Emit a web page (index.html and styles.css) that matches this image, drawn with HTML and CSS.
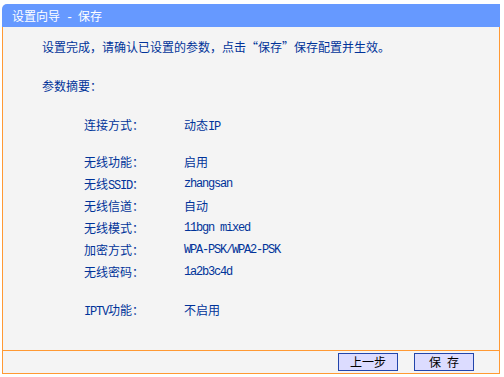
FILE: index.html
```html
<!DOCTYPE html>
<html lang="zh-CN">
<head>
    <meta charset="UTF-8">
    <meta name="viewport" content="width=device-width, initial-scale=1.0">
    <title>设置向导 - 保存</title>
    <link rel="stylesheet" href="styles.css">
</head>
<body>
    <div class="panel">
        <div class="title">设置向导<span class="en"> - </span>保存</div>
        <div class="content">
            <p class="intro">设置完成，请确认已设置的参数，点击<span class="q">“</span>保存<span class="q">”</span>保存配置并生效。</p>
            <p class="summary">参数摘要：</p>

            <div class="params">
                <div class="label">连接方式：</div>
                <div class="value">动态<span class="en">IP</span></div>
            </div>

            <div class="params">
                <div class="label">无线功能：</div>
                <div class="value">启用</div>
                <div class="label">无线<span class="en">SSID</span>：</div>
                <div class="value en">zhangsan</div>
                <div class="label">无线信道：</div>
                <div class="value">自动</div>
                <div class="label">无线模式：</div>
                <div class="value en">11bgn mixed</div>
                <div class="label">加密方式：</div>
                <div class="value en">WPA-PSK/WPA2-PSK</div>
                <div class="label">无线密码：</div>
                <div class="value en">1a2b3c4d</div>
            </div>

            <div class="params">
                <div class="label"><span class="en">IPTV</span>功能：</div>
                <div class="value">不启用</div>
            </div>
        </div>
        <div class="footer">
            <button type="button" class="btn">上一步</button>
            <button type="button" class="btn">保<span class="en"> </span>存</button>
        </div>
    </div>
</body>
</html>
```

FILE: styles.css
```css
body {
  margin: 0;
  background: #ffffff;
  font-family: "Noto Sans CJK SC", "DejaVu Sans", sans-serif;
  font-size: 12px;
  color: #003399;
}

/* half-width latin text, 6px per char like the router's bitmap font */
.en {
  font-family: "Liberation Mono", monospace;
  font-size: 12px;
  letter-spacing: -1.2px;
  white-space: pre;
}

.q {
  display: inline-block;
  width: 12px;
}

.panel {
  width: 498px;
  margin: 4px 0 0 2px;
}

.title {
  height: 23px;
  line-height: 23px;
  padding-left: 10px;
  background: #6699ff;
  color: #ffffff;
  border-top-left-radius: 5px;
}

.content {
  height: 314px;
  padding-top: 9px;
  background: #f4f4f4;
  border-left: 1px solid #ff9933;
  border-right: 1px solid #ff9933;
}

.intro, .summary {
  margin: 0 0 0 39px;
  line-height: 22px;
}

.summary {
  margin-top: 17px;
}

.params {
  display: grid;
  grid-template-columns: 100px auto;
  grid-auto-rows: 22px;
  margin: 17px 0 0 81px;
  line-height: 22px;
}

.params + .params {
  margin-top: 15px;
}

.params:last-child {
  margin-top: 16px;
}

.footer {
  display: flex;
  justify-content: flex-end;
  gap: 16px;
  height: 18px;
  padding: 2px 25px 2px 0;
  background: #f4f4f4;
  border: 1px solid #ff9933;
}

.btn {
  width: 60px;
  height: 18px;
  padding: 0;
  margin: 0;
  background: #dcdcff;
  border: 1px solid #2244aa;
  color: #000000;
  font-family: "Noto Sans CJK SC", sans-serif;
  font-size: 12px;
  line-height: 16px;
}
```
